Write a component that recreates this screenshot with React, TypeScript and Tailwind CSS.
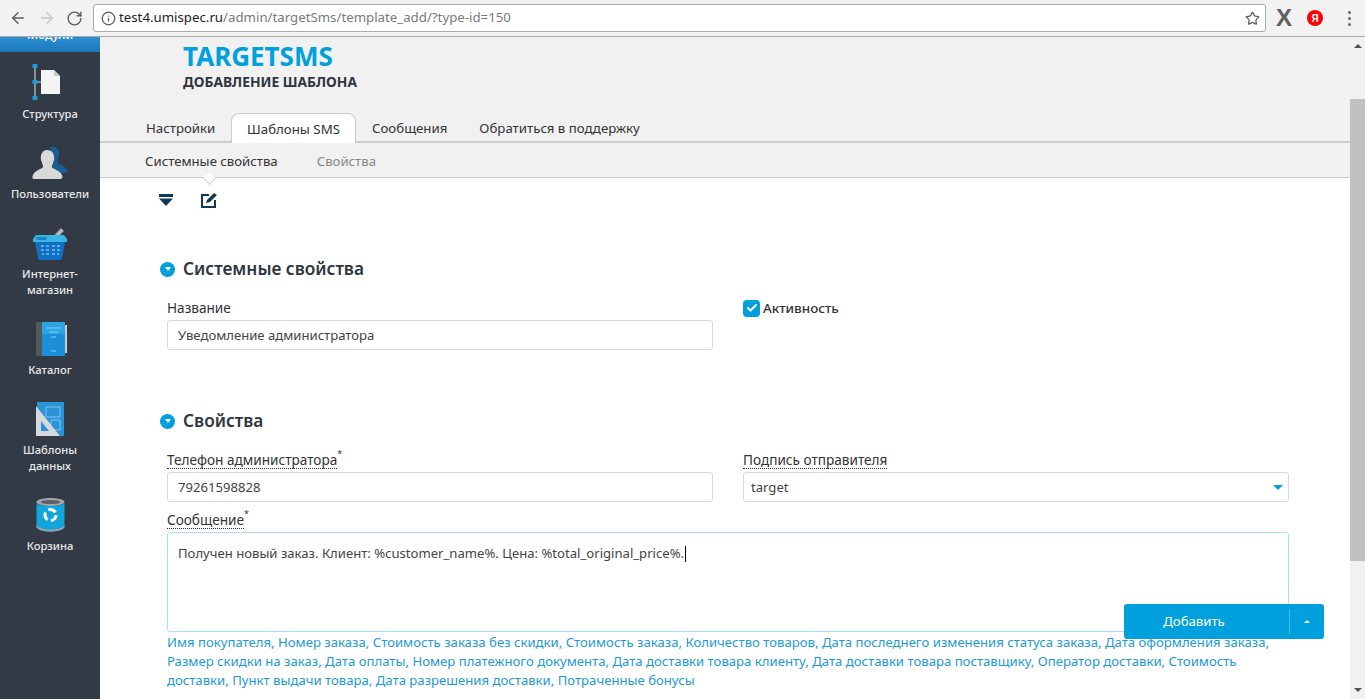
import { ArrowLeft, ArrowRight, RotateCw, Info, Star, Check } from "lucide-react";

const font = "font-['Noto_Sans','Open_Sans',sans-serif]";

function StructureIcon() {
  return (
    <svg width="36" height="36" viewBox="0 0 36 36">
      <path d="M3 2v32" stroke="#8a8f96" strokeWidth="2" />
      <path d="M3 18h10" stroke="#8a8f96" strokeWidth="2" />
      <rect x="0.500" y="0" width="5" height="4" fill="#1e9bdc" />
      <rect x="0.500" y="16" width="5" height="4" fill="#1e9bdc" />
      <rect x="0.500" y="32" width="5" height="4" fill="#1e9bdc" />
      <path d="M9 6h13l6 6v18H9z" fill="#f4f4f4" />
      <path d="M22 6l6 6h-6z" fill="#c9c9c9" />
    </svg>
  );
}

function UsersIcon() {
  return (
    <svg width="36" height="34" viewBox="0 0 36 34">
      <path d="M18 1c5-2 10 2 9 8-1 4-2 6-1 8 3 2 7 3 9 7 1 2 0 3-2 3H22z" fill="#1c5d90" />
      <path d="M15 4c5 0 8 4 7 10-1 3-2 5-2 7 0 2 8 3 10 8 1 3 0 4-2 4H2c-2 0-2-2-1-4 2-5 9-6 10-8 0-2-1-4-2-7-1-6 2-10 6-10z" fill="#d9d9d9" />
    </svg>
  );
}

function BasketIcon() {
  return (
    <svg width="34" height="35" viewBox="0 0 34 35">
      <path d="M16 16L28 3l3 3-12 12z" fill="#b4b8bc" stroke="#5f646a" strokeWidth="1" />
      <path d="M3 10h28l3 4v3H0v-3z" fill="#3ab5e6" />
      <path d="M3 12h11l-1 3H4z" fill="#1a86c8" />
      <path d="M2 17h30l-3 16c0 1-1 2-2 2H7c-1 0-2-1-2-2z" fill="#1270c2" />
      <path d="M8 20h3v2H8zM13 20h3v2h-3zM19 20h3v2h-3zM24 20h3v2h-3zM8 24h3v2H8zM13 24h3v2h-3zM19 24h3v2h-3zM24 24h3v2h-3zM9 28h2v2H9zM13 28h3v2h-3zM19 28h3v2h-3zM24 28h2v2h-2z" fill="#58ade6" />
    </svg>
  );
}

function BookIcon() {
  return (
    <svg width="31" height="34" viewBox="0 0 31 34" className="translate-x-px">
      <rect x="0" y="0" width="6" height="34" rx="1" fill="#55585d" />
      <rect x="6" y="0" width="23" height="34" fill="#1b8fd8" />
      <rect x="6" y="0" width="23" height="12" fill="#2ba3e4" />
      <rect x="29" y="3" width="2" height="28" fill="#c9ccd0" />
      <path d="M10 6h15M13 10h9M15 15h5M15 29h5" stroke="#86d0f4" strokeWidth="1" />
    </svg>
  );
}

function TemplatesIcon() {
  return (
    <svg width="28" height="34" viewBox="0 0 28 34">
      <rect x="1" y="0" width="27" height="34" fill="#2a94d6" />
      <path d="M10 5h14v10H10zM15 18h9v10h-9z" fill="none" stroke="#7cc4ee" strokeWidth="1" />
      <path fillRule="evenodd" d="M0 4l24 30H0zM5 19v10h8z" fill="#d5d8dc" />
    </svg>
  );
}

function TrashIcon() {
  return (
    <svg width="29" height="34" viewBox="0 0 29 34">
      <ellipse cx="14.500" cy="4" rx="14" ry="4" fill="#a4a8ad" />
      <ellipse cx="14.500" cy="4" rx="10" ry="2" fill="#5d6167" />
      <path d="M.500 5c2 4 26 4 28 0v24c-2 6-26 6-28 0z" fill="#12a5dc" />
      <path d="M.500 27c2 6 26 6 28 0v2c-2 6-26 6-28 0z" fill="#9da1a6" />
      <circle cx="14.500" cy="17" r="5.500" fill="none" stroke="#fff" strokeWidth="3" strokeDasharray="8 3.500" />
    </svg>
  );
}

const navItems = [
  { label: ["Структура"], icon: <StructureIcon />, h: "h-[80px]" },
  { label: ["Пользователи"], icon: <UsersIcon />, h: "h-[80px]" },
  { label: ["Интернет-", "магазин"], icon: <BasketIcon />, h: "h-[96px]" },
  { label: ["Каталог"], icon: <BookIcon />, h: "h-[80px]" },
  { label: ["Шаблоны", "данных"], icon: <TemplatesIcon />, h: "h-[96px]" },
  { label: ["Корзина"], icon: <TrashIcon />, h: "h-[80px]" },
];

const links = "Имя покупателя, Номер заказа, Стоимость заказа без скидки, Стоимость заказа, Количество товаров, Дата последнего изменения статуса заказа, Дата оформления заказа, Размер скидки на заказ, Дата оплаты, Номер платежного документа, Дата доставки товара клиенту, Дата доставки товара поставщику, Оператор доставки, Стоимость доставки, Пункт выдачи товара, Дата разрешения доставки, Потраченные бонусы";

function BrowserBar() {
  return (
    <div className="flex h-[37px] shrink-0 items-center border-b border-[#a9a9a9] bg-[#f2f2f2] pl-[9px]">
      <ArrowLeft size={18} strokeWidth={2} className="text-[#5f5f5f]" />
      <ArrowRight size={18} strokeWidth={2} className="ml-[11px] text-[#c8c8c8]" />
      <RotateCw size={17} strokeWidth={2} className="ml-[10px] text-[#5f5f5f]" />
      <div className="ml-[10px] flex h-[28px] w-[1173px] items-center rounded-[3px] border border-[#ababab] bg-white pl-[7px] pr-[5px]">
        <Info size={15} className="text-[#5a5a5a]" />
        <span className="ml-[3px] text-[13.250px] text-[#222]">
          test4.umispec.ru<span className="text-[#7a7a7a]">/admin/targetSms/template_add/?type-id=150</span>
        </span>
        <Star size={15} strokeWidth={2} className="ml-auto text-[#5f5f5f]" />
      </div>
      <span className="ml-[10px] text-[24px] font-bold leading-none text-[#5f5f5f] font-['Liberation_Sans',sans-serif]">X</span>
      <span className="ml-[15px] flex h-[16px] w-[16px] items-center justify-center rounded-full bg-[#f00] text-[10px] font-bold text-white font-['Liberation_Sans',sans-serif]">Я</span>
      <span className="ml-[25px] flex flex-col gap-[3px]">
        <i className="h-[3px] w-[3px] rounded-full bg-[#666]" />
        <i className="h-[3px] w-[3px] rounded-full bg-[#666]" />
        <i className="h-[3px] w-[3px] rounded-full bg-[#666]" />
      </span>
    </div>
  );
}

function Sidebar() {
  return (
    <aside className="w-[100px] shrink-0 overflow-hidden bg-[#323a46]">
      <div className="flex h-[15px] items-start justify-center overflow-hidden bg-gradient-to-b from-[#2a8fd2] to-[#1c78bd]">
        <span className="-mt-[11px] text-[12px] font-medium text-white">Модули</span>
      </div>
      {navItems.map((item) => (
        <div key={item.label[0]} className={`flex flex-col items-center justify-end pb-[10px] ${item.h}`}>
          <div className="mb-[6px] flex flex-1 items-end justify-center">{item.icon}</div>
          {item.label.map((line) => (
            <span key={line} className="text-[11.200px] font-medium leading-[16px] text-[#e8e8e8]">{line}</span>
          ))}
        </div>
      ))}
    </aside>
  );
}

function SectionTitle({ title }: { title: string }) {
  return (
    <div className="flex items-center pl-[60px]">
      <span className="flex h-[15px] w-[15px] items-center justify-center rounded-full bg-[#00a0dc]">
        <i className="border-x-[3.500px] border-t-[4px] border-x-transparent border-t-white" />
      </span>
      <h2 className="ml-[8px] text-[17.250px] font-semibold leading-[24px] text-[#2e3640]">{title}</h2>
    </div>
  );
}

function Label({ text, required, dotted }: { text: string; required?: boolean; dotted?: boolean }) {
  return (
    <div className="flex h-[16px] items-center text-[13.600px] leading-[16px] text-[#333]">
      <span className={dotted ? "border-b border-dotted border-[#333]" : ""}>{text}</span>
      {required && <sup className="-mt-[4px] text-[9px] leading-none">*</sup>}
    </div>
  );
}

function Field({ value }: { value: string }) {
  return (
    <div className="mt-[4px] flex h-[30px] items-center rounded-[3px] border border-[#d9d9d9] bg-white pl-[10px] pt-[1px] text-[13.120px] text-[#444]">{value}</div>
  );
}

export default function App() {
  return (
    <div className={`flex h-screen flex-col overflow-hidden bg-white ${font}`}>
      <BrowserBar />
      <div className="flex min-h-0 flex-1">
        <Sidebar />
        <main className="relative min-w-0 flex-1 overflow-hidden">
          <header className="h-[141px] border-b border-[#ccc] bg-[#f1f1f1]">
            <div className="h-[76px] pl-[83px] pt-[5px]">
              <h1 className="text-[26px] font-bold leading-[28px] text-[#00a0dc]">TARGETSMS</h1>
              <p className="mt-[3px] text-[13.800px] font-bold uppercase leading-[18px] text-[#2e3640]">Добавление шаблона</p>
            </div>
            <nav className="flex h-[30px] items-end border-b-2 border-[#ccc] pl-[31px] text-[13.250px] text-[#333]">
              <span className="mb-[-2px] flex h-[30px] w-[100px] items-center pl-[15px] pt-[2px]">Настройки</span>
              <span className="mb-[-2px] flex h-[30px] w-[125px] items-center justify-center rounded-t-[8px] border border-b-0 border-[#ccc] bg-white pt-[2px]">Шаблоны SMS</span>
              <span className="mb-[-2px] flex h-[30px] items-center px-[16px] pt-[2px]">Сообщения</span>
              <span className="mb-[-2px] flex h-[30px] items-center px-[16px] pt-[2px]">Обратиться в поддержку</span>
            </nav>
            <div className="relative flex h-[35px] items-center gap-[39px] pl-[45px] pt-[2px] text-[13.200px]">
              <span className="text-[#333]">Системные свойства</span>
              <span className="text-[#888]">Свойства</span>
              <i className="absolute bottom-[-5px] left-[105px] h-[9px] w-[9px] rotate-45 border-b border-r border-[#ccc] bg-white" />
            </div>
          </header>

          <div className="flex h-[44px] items-center gap-[28px] pl-[59px]">
            <svg width="14" height="12" viewBox="0 0 14 12"><path d="M0 0h14v3H0zM0 4.500h14L7 12z" fill="#0f3a52" /></svg>
            <svg width="17" height="16" viewBox="0 0 17 16">
              <path d="M8 3H1v12h13V8" fill="none" stroke="#0f3a52" strokeWidth="2" />
              <path d="M5 11l1-3 7-7 3 2-7 7z" fill="#0f3a52" />
            </svg>
          </div>

          <div className="mt-[35px]"><SectionTitle title="Системные свойства" /></div>
          <div className="mt-[19px] grid grid-cols-[546px_546px] gap-x-[30px] pl-[67px]">
            <div>
              <Label text="Название" />
              <Field value="Уведомление администратора" />
            </div>
            <div className="flex h-[16px] items-center">
              <span className="flex h-[17px] w-[17px] items-center justify-center rounded-[4px] bg-[#00a0dc]">
                <Check size={12} strokeWidth={4} className="text-white" />
              </span>
              <span className="ml-[3px] pt-[1px] text-[13.400px] font-medium text-[#333]">Активность</span>
            </div>
          </div>

          <div className="mt-[59px]"><SectionTitle title="Свойства" /></div>
          <div className="mt-[19px] grid grid-cols-[546px_546px] gap-x-[30px] pl-[67px]">
            <div>
              <Label text="Телефон администратора" required dotted />
              <Field value="79261598828" />
            </div>
            <div>
              <Label text="Подпись отправителя" dotted />
              <div className="mt-[4px] flex h-[30px] items-center justify-between rounded-[3px] border border-[#d9d9d9] bg-white pl-[7px] pr-[5px] pt-[1px] text-[13.120px] text-[#444]">
                target
                <i className="border-x-[5px] border-t-[5px] border-x-transparent border-t-[#00a0dc]" />
              </div>
            </div>
            <div className="col-span-2 mt-[10px]">
              <Label text="Сообщение" required dotted />
              <div className="mt-[4px] h-[100px] rounded-[3px] border border-[#a6e1f6] bg-white pl-[10px] pt-[11px] text-[13.120px] leading-[18px] text-[#444]">
                Получен новый заказ. Клиент: %customer_name%. Цена: %total_original_price%.<span className="ml-px inline-block h-[16px] w-px bg-black align-middle" />
              </div>
              <p className="mt-[1px] text-[13.150px] leading-[19px] text-[#1e9ad6]">{links}</p>
            </div>
          </div>

          <div className="absolute left-[1024px] top-[567px] flex h-[35px] w-[200px] items-center rounded-[3px] bg-[#00a0dc] text-[13.200px] text-white">
            <span className="flex-1 pr-[25px] text-center">Добавить</span>
            <span className="flex h-[25px] w-[35px] items-center justify-center border-l border-[#4dbde8]">
              <i className="border-x-[3px] border-b-[3px] border-x-transparent border-b-white" />
            </span>
          </div>
        </main>
        <div className="flex w-[15px] shrink-0 flex-col items-center bg-[#f1f1f1]">
          <i className="mt-[7px] border-x-[4px] border-b-[4px] border-x-transparent border-b-[#505050]" />
          <div className="mt-[51px] h-[462px] w-full bg-[#c1c1c1]" />
          <i className="mt-auto mb-[7px] border-x-[4px] border-t-[4px] border-x-transparent border-t-[#505050]" />
        </div>
      </div>
    </div>
  );
}
